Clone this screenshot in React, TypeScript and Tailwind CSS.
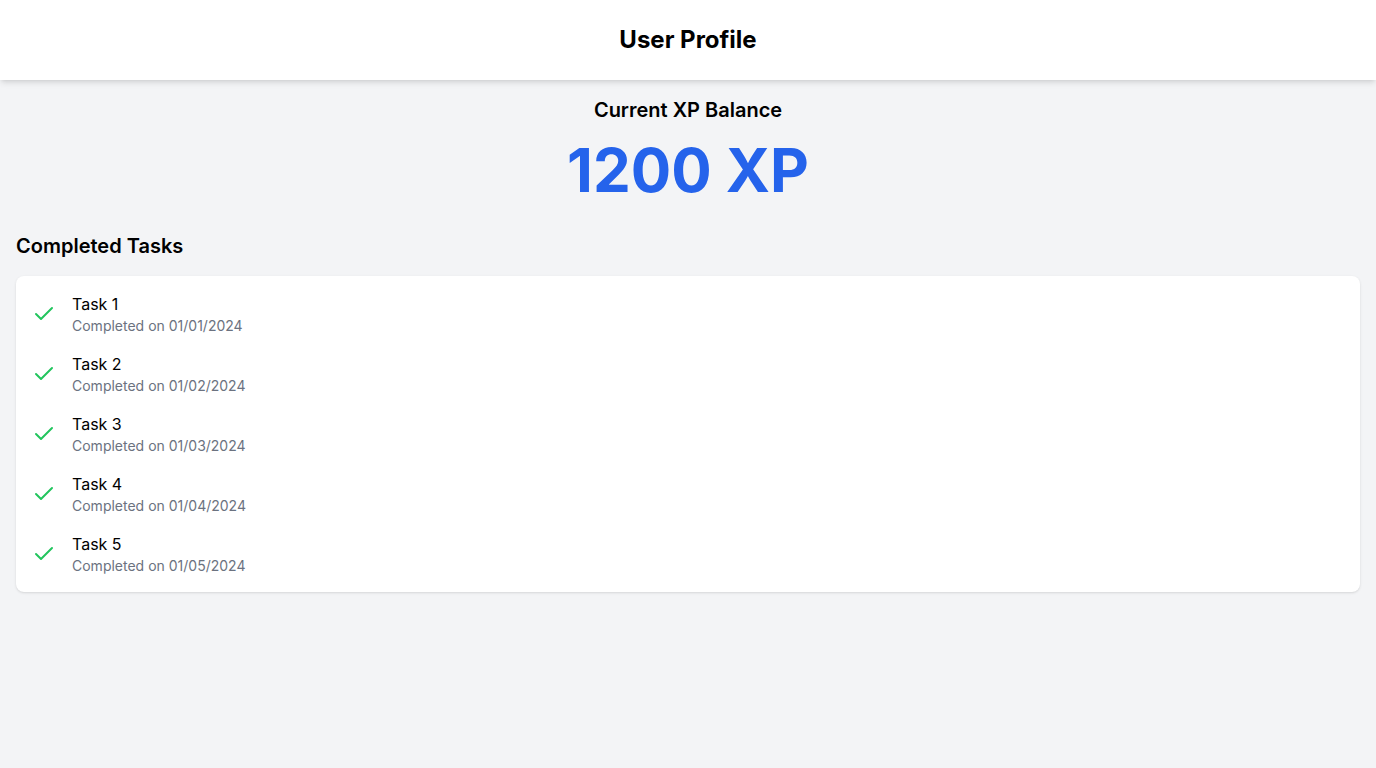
import React from 'react';
import { Check } from 'lucide-react';

const TASKS = [
  { name: 'Task 1', date: '01/01/2024' },
  { name: 'Task 2', date: '01/02/2024' },
  { name: 'Task 3', date: '01/03/2024' },
  { name: 'Task 4', date: '01/04/2024' },
  { name: 'Task 5', date: '01/05/2024' },
];

const App = () => (
  <div className="min-h-screen bg-[#f3f4f6] font-['Inter',sans-serif] text-black">
    <header className="bg-white p-6 text-center shadow-md">
      <h1 className="text-2xl font-bold">User Profile</h1>
    </header>
    <main className="p-4">
      <section className="mb-8 text-center">
        <h2 className="text-xl font-semibold">Current XP Balance</h2>
        <p className="mt-4 text-6xl font-bold leading-none text-[#2563eb]">1200 XP</p>
      </section>
      <section>
        <h2 className="mb-4 text-xl font-semibold">Completed Tasks</h2>
        <ul className="space-y-4 rounded-lg bg-white p-4 shadow-sm">
          {TASKS.map((t) => (
            <li key={t.name} className="flex items-center gap-4">
              <Check className="h-6 w-6 text-[#22c55e]" />
              <div>
                <p className="text-base">{t.name}</p>
                <p className="text-sm text-[#6b7280]">Completed on {t.date}</p>
              </div>
            </li>
          ))}
        </ul>
      </section>
    </main>
  </div>
);

export default App;
